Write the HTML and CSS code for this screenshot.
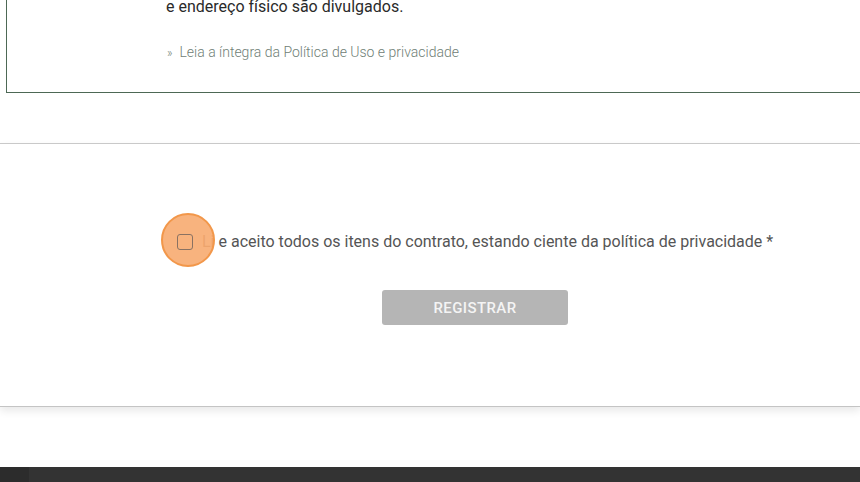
FILE: index.html
```html
<!DOCTYPE html>
<html lang="pt-BR">
<head>
<meta charset="utf-8">
<link rel="stylesheet" href="styles.css">
</head>
<body>
<div class="page">
  <div class="policy-box">
    <p class="policy-text">e endereço físico são divulgados.</p>
    <p class="policy-link"><span class="raquo">»</span>Leia a íntegra da Política de Uso e privacidade</p>
  </div>
  <div class="gap-top"></div>
  <section class="card">
    <div class="form">
      <label class="agree">
        <span class="check-wrap"><span class="highlight"></span><span class="checkbox"></span></span>
        <span class="agree-text"><span class="li">Li</span> e aceito todos os itens do contrato, estando ciente da política de privacidade *</span>
      </label>
      <div class="actions">
        <button class="btn" type="button">REGISTRAR</button>
      </div>
    </div>
  </section>
  <div class="gap-bottom"></div>
  <footer class="footer"><span class="footer-mark"></span></footer>
</div>
</body>
</html>
```
FILE: styles.css
```css
* { box-sizing: border-box; }
html, body { margin: 0; padding: 0; background: #fff; overflow: hidden; }
body { font-family: Roboto, "Liberation Sans", Arial, sans-serif; width: 860px; height: 482px; }
.page { display: flex; flex-direction: column; height: 482px; }

.policy-box {
  margin-left: 6px;
  margin-right: -10px;
  height: 93px;
  border: 1px solid #4d6855;
  border-top: none;
  padding-left: 159px;
  display: flex;
  flex-direction: column;
}
.policy-text {
  margin: -3px 0 0;
  font-size: 16px;
  line-height: 20px;
  color: #2a2a2a;
}
.policy-link {
  margin: 27px 0 0;
  font-size: 14px;
  line-height: 16px;
  font-weight: 300;
  color: #6f8076;
}
.raquo { display: inline-block; margin: 0 7px 0 1px; font-size: 12px; }

.gap-top { height: 50px; }

.card {
  height: 264px;
  border-top: 1px solid #c9c9c9;
  border-bottom: 1px solid #c4c4c4;
  box-shadow: 0 4px 8px rgba(0,0,0,0.09);
  background: #fff;
  padding-left: 177px;
}
.form { display: flex; flex-direction: column; align-items: flex-start; }

.agree {
  margin-top: 88px;
  display: flex;
  align-items: center;
  font-size: 16px;
  line-height: 20px;
  color: #555;
  cursor: pointer;
}
.check-wrap {
  position: relative;
  width: 16px;
  height: 16px;
  margin-right: 9px;
}
.highlight {
  position: absolute;
  left: -16px;
  top: -21px;
  width: 54px;
  height: 54px;
  border-radius: 50%;
  background: rgba(247, 168, 108, 0.88);
  border: 2px solid #f2974a;
}
.checkbox {
  position: absolute;
  left: 0;
  top: 0;
  width: 16px;
  height: 16px;
  border: 1.5px solid #8a7262;
  border-radius: 3px;
}
.agree-text { white-space: nowrap; }
.li { color: #9a8070; }

.actions { margin-top: 38px; margin-left: 205px; }
.btn {
  width: 186px;
  height: 35px;
  border: none;
  border-radius: 3px;
  background: #b5b5b5;
  color: #f4f4f4;
  font-family: Roboto, "Liberation Sans", Arial, sans-serif;
  font-size: 15px;
  font-weight: 500;
  letter-spacing: 0.4px;
}

.gap-bottom { height: 60px; }

.footer {
  flex: 1;
  background: #333;
  display: flex;
}
.footer-mark { width: 29px; background: #2c2c2c; }
```
